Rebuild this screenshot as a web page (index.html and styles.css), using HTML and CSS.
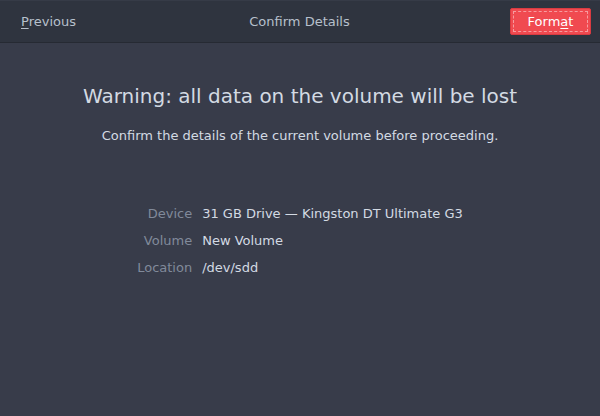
FILE: index.html
```html
<!DOCTYPE html>
<html>
<head>
<meta charset="utf-8">
<link rel="stylesheet" href="styles.css">
</head>
<body>
<div class="window">
  <header class="headerbar">
    <button class="btn-flat"><u>P</u>revious</button>
    <div class="title">Confirm Details</div>
    <button class="btn-destructive"><span class="focus">Form<u>a</u>t</span></button>
  </header>
  <main class="content">
    <h1 class="heading">Warning: all data on the volume will be lost</h1>
    <p class="sub">Confirm the details of the current volume before proceeding.</p>
    <div class="details">
      <div class="label">Device</div><div class="value">31 GB Drive — Kingston DT Ultimate G3</div>
      <div class="label">Volume</div><div class="value">New Volume</div>
      <div class="label">Location</div><div class="value">/dev/sdd</div>
    </div>
  </main>
</div>
</body>
</html>
```
FILE: styles.css
```css
* { box-sizing: border-box; }
html, body { margin: 0; padding: 0; }
body {
  width: 600px;
  height: 416px;
  background: #383c4a;
  font-family: "DejaVu Sans", sans-serif;
  color: #d3dae3;
  overflow: hidden;
}
.window { display: flex; flex-direction: column; height: 416px; }
.headerbar {
  height: 43px;
  background: #2f343f;
  border-top: 1px solid #363b47;
  border-bottom: 1px solid #262a33;
  display: grid;
  grid-template-columns: 1fr auto 1fr;
  align-items: center;
  padding: 0 9px 0 8px;
}
.btn-flat {
  justify-self: start;
  background: none;
  border: none;
  color: #b7c0cc;
  font: inherit;
  font-size: 13px;
  padding: 5px 13px;
}
.btn-flat u, .btn-destructive u { text-underline-offset: 2px; }
.title { font-size: 13px; color: #b7c0cc; }
.btn-destructive {
  justify-self: end;
  background: #f04a50;
  border: 1px solid #d93b41;
  border-radius: 2px;
  padding: 2px;
  width: 81px;
  height: 27px;
  font: inherit;
  font-size: 13px;
  color: #ffffff;
}
.btn-destructive .focus {
  display: flex;
  align-items: center;
  justify-content: center;
  height: 100%;
  border: 1px dashed rgba(255,255,255,0.45);
}
.content {
  flex: 1;
  display: flex;
  flex-direction: column;
  align-items: center;
}
.heading {
  margin: 41px 0 0;
  font-size: 20px;
  font-weight: normal;
  color: #d3dae3;
}
.sub {
  margin: 20px 0 0;
  font-size: 13px;
  color: #d3dae3;
}
.details {
  margin: 63px 0 0 0;
  display: grid;
  grid-template-columns: auto auto;
  column-gap: 10px;
  row-gap: 11px;
  font-size: 13px;
  line-height: 16px;
}
.label { text-align: right; color: #818a9a; }
.value { color: #d3dae3; }
```
